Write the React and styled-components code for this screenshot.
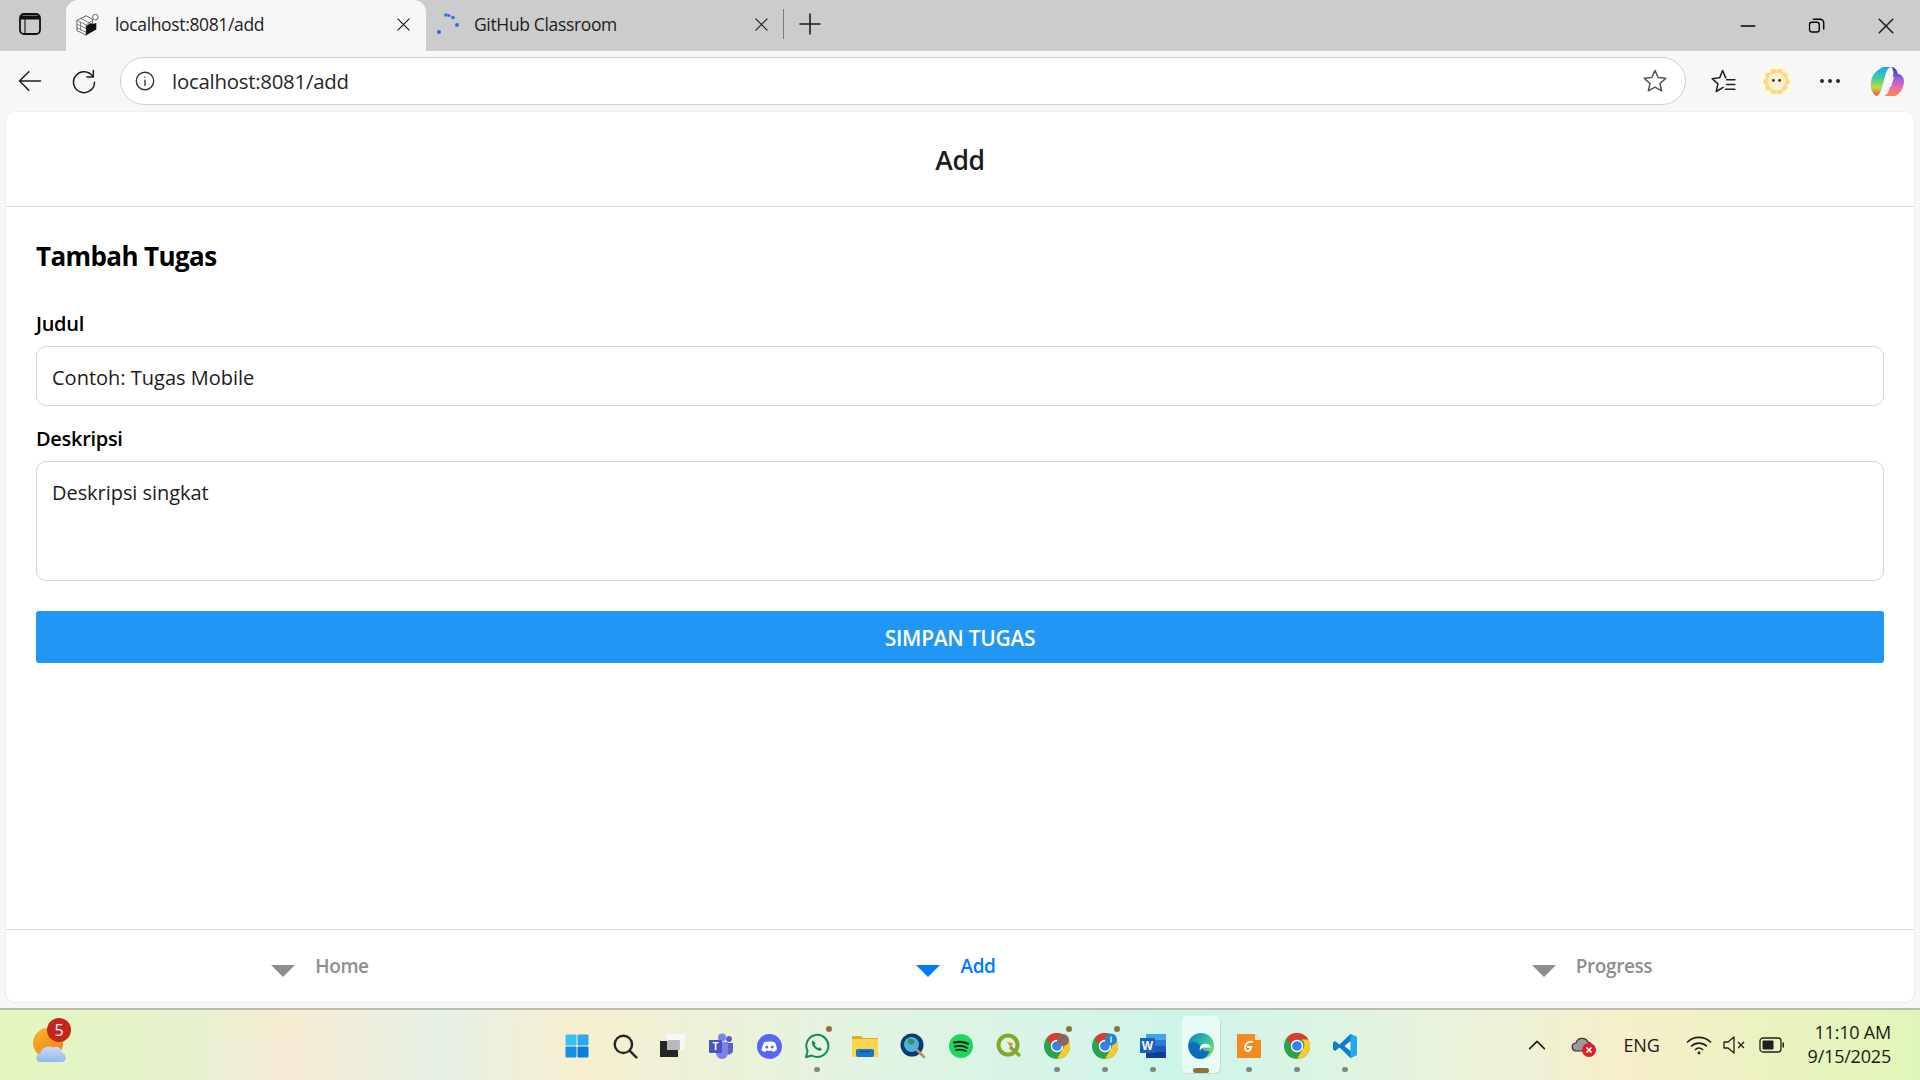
import React from 'react';
import styled, { createGlobalStyle } from 'styled-components';

const UI_FONT = '"Open Sans", "Noto Sans", "Liberation Sans", sans-serif';

const GlobalStyle = createGlobalStyle`
  html, body {
    margin: 0;
    padding: 0;
    height: 100%;
    overflow: hidden;
  }

  body {
    font-family: ${UI_FONT};
    background-color: #f7f7f7;
  }

  * {
    box-sizing: border-box;
  }
`;

const Screen = styled.div`
  display: flex;
  flex-direction: column;
  width: 1920px;
  height: 1080px;
  background-color: #f7f7f7;
`;

/* browser tab strip */
const TabStrip = styled.div`
  display: flex;
  align-items: center;
  height: 51px;
  flex-shrink: 0;
  background-color: #cccccc;
`;

const StripButton = styled.div`
  display: flex;
  align-items: center;
  justify-content: center;
  width: 66px;
  height: 51px;
  padding: 0 7px 4px 0;
  flex-shrink: 0;
`;

const Tab = styled.div`
  display: flex;
  align-items: center;
  width: ${(props) => (props.$active ? '360px' : '357px')};
  height: 51px;
  padding: ${(props) => (props.$active ? '0 15px 3px 10px' : '0 14px 3px 9px')};
  flex-shrink: 0;
  background-color: ${(props) => (props.$active ? '#f7f7f7' : 'transparent')};
  border-radius: ${(props) => (props.$active ? '12px 12px 0 0' : '0')};
  color: #1d1d1d;
`;

const Favicon = styled.div`
  display: flex;
  align-items: center;
  justify-content: center;
  width: 24px;
  height: 24px;
  margin-right: 15px;
  flex-shrink: 0;
`;

const TabTitle = styled.span`
  flex: 1;
  font-size: 17.5px;
  letter-spacing: -0.35px;
  white-space: nowrap;
`;

const TabDivider = styled.div`
  width: 1px;
  height: 30px;
  margin-bottom: 3px;
  background-color: #7c7c7c;
  flex-shrink: 0;
`;

const NewTab = styled.div`
  display: flex;
  align-items: center;
  justify-content: center;
  width: 52px;
  height: 51px;
  padding-bottom: 3px;
  flex-shrink: 0;
`;

const WindowControls = styled.div`
  display: flex;
  align-items: center;
  margin-left: auto;
`;

const WindowButton = styled.div`
  display: flex;
  align-items: center;
  justify-content: center;
  width: 69px;
  height: 51px;
`;

/* address bar row */
const Toolbar = styled.div`
  display: flex;
  align-items: center;
  height: 60px;
  flex-shrink: 0;
  padding: 0 6px 0 0;
`;

const ToolButton = styled.div`
  display: flex;
  align-items: center;
  justify-content: center;
  width: 54px;
  height: 48px;
  flex-shrink: 0;
  margin-left: ${(props) => props.$offset || 0}px;
`;

const AddressBar = styled.div`
  display: flex;
  align-items: center;
  flex: 1;
  height: 48px;
  margin: 0 9px 0 9px;
  padding: 0 16px 0 13px;
  background-color: #ffffff;
  border: 1.5px solid #d0d0d0;
  border-radius: 24px;
`;

const Url = styled.span`
  flex: 1;
  margin-left: 16px;
  font-size: 20.4px;
  letter-spacing: -0.25px;
  color: #262626;
`;

const ProfileCircle = styled.div`
  display: flex;
  align-items: center;
  justify-content: center;
  width: 35px;
  height: 35px;
  border-radius: 50%;
  background-color: #fdf9e8;
`;

/* page content */
const Page = styled.div`
  display: flex;
  flex-direction: column;
  flex: 1;
  margin: 0 5px 5px;
  background-color: #ffffff;
  border: 1px solid #ececec;
  border-top-color: #f0f0f0;
  border-radius: 10px;
  overflow: hidden;
`;

const PageHeader = styled.header`
  display: flex;
  align-items: center;
  justify-content: center;
  height: 95px;
  padding-top: 2px;
  flex-shrink: 0;
  border-bottom: 1px solid #d8d8d8;
`;

const HeaderTitle = styled.h1`
  margin: 0;
  font-size: 26.5px;
  font-weight: 600;
  letter-spacing: -0.4px;
  color: #1c1c1e;
`;

const Form = styled.form`
  display: flex;
  flex-direction: column;
  flex: 1;
  padding: 33px 30px 0;
`;

const FormTitle = styled.h2`
  margin: 0 0 40px;
  font-size: 26px;
  line-height: 32px;
  font-weight: 700;
  letter-spacing: -0.6px;
  color: #000000;
`;

const Label = styled.label`
  display: block;
  margin-bottom: 10px;
  font-size: 20px;
  line-height: 24px;
  font-weight: 600;
  letter-spacing: -0.3px;
  color: #000000;
`;

const TextInput = styled.input`
  display: block;
  width: 100%;
  height: 60px;
  margin-bottom: 21px;
  padding: 2px 15px 0;
  font-family: ${UI_FONT};
  font-size: 20px;
  letter-spacing: 0;
  background-color: #ffffff;
  border: 1px solid #ccd6e4;
  border-radius: 10px;
  outline: none;

  &::placeholder {
    color: #1c1c1c;
    opacity: 1;
  }
`;

const TextArea = styled.textarea`
  display: block;
  width: 100%;
  height: 120px;
  margin-bottom: 30px;
  padding: 17px 15px;
  font-family: ${UI_FONT};
  font-size: 20px;
  line-height: 27px;
  letter-spacing: -0.05px;
  background-color: #ffffff;
  border: 1px solid #ccd6e4;
  border-radius: 10px;
  outline: none;
  resize: none;

  &::placeholder {
    color: #1c1c1c;
    opacity: 1;
  }
`;

const SaveButton = styled.button`
  display: block;
  width: 100%;
  height: 52px;
  padding: 2px 0 0;
  font-family: ${UI_FONT};
  font-size: 21px;
  font-weight: 600;
  letter-spacing: -0.3px;
  color: #ffffff;
  background-color: #2196f3;
  border: none;
  border-radius: 3px;
`;

const TabBar = styled.nav`
  display: grid;
  grid-template-columns: repeat(3, 1fr);
  height: 73px;
  flex-shrink: 0;
  border-top: 1px solid #d8d8d8;
`;

const TabBarItem = styled.div`
  display: flex;
  align-items: center;
  justify-content: center;
  gap: 20px;
  padding: 0 8px 0 0;
  font-size: 19px;
  font-weight: 600;
  letter-spacing: -0.4px;
  color: ${(props) => (props.$active ? '#007aff' : '#8e8e8f')};
`;

const Triangle = styled.span`
  display: block;
  width: 0;
  height: 0;
  margin-top: 9px;
  border-left: 12px solid transparent;
  border-right: 12px solid transparent;
  border-top: 12px solid ${(props) => (props.$active ? '#007aff' : '#8e8e8f')};
`;

/* windows taskbar */
const Taskbar = styled.footer`
  display: grid;
  grid-template-columns: 553px auto 1fr;
  align-items: center;
  height: 72px;
  flex-shrink: 0;
  border-top: 2px solid #bcbcae;
  background: linear-gradient(
    90deg,
    #e3f6bf 0%,
    #e6f2cf 10%,
    #f6ecd2 15%,
    #e6f1e6 23%,
    #f6efcf 30%,
    #e2f4e2 45%,
    #cdf5ea 62%,
    #e9f3dc 75%,
    #f6efca 85%,
    #e0f6b8 100%
  );
`;

const Widget = styled.div`
  position: relative;
  width: 40px;
  height: 40px;
  margin: 0 0 0 30px;
`;

const WidgetBadge = styled.span`
  position: absolute;
  top: -7px;
  left: 17px;
  display: flex;
  align-items: center;
  justify-content: center;
  width: 24px;
  height: 24px;
  font-size: 16px;
  color: #ffffff;
  background-color: #c4261b;
  border-radius: 50%;
`;

const AppList = styled.div`
  display: flex;
  align-items: center;
  height: 70px;
`;

const AppSlot = styled.div`
  position: relative;
  display: flex;
  align-items: center;
  justify-content: center;
  width: 48px;
  height: 66px;
  padding-top: 2px;

  &::before {
    content: '';
    display: ${(props) => (props.$focused ? 'block' : 'none')};
    position: absolute;
    top: 4px;
    bottom: 5px;
    left: 5px;
    right: 5px;
    background-color: rgba(255, 255, 255, 0.55);
    border-radius: 5px;
    box-shadow: 1px 1px 0 rgba(190, 215, 210, 0.8);
  }

  svg {
    position: relative;
    flex-shrink: 0;
  }
`;

const RunDot = styled.span`
  position: absolute;
  bottom: ${(props) => (props.$focused ? '5px' : '6px')};
  left: 50%;
  width: ${(props) => (props.$focused ? '16px' : '6px')};
  height: 5px;
  background-color: ${(props) => (props.$focused ? '#8a7436' : '#7e8a84')};
  border-radius: 3px;
  transform: translateX(-50%);
`;

const NotifyDot = styled.span`
  position: absolute;
  top: 14px;
  right: 9px;
  width: 6px;
  height: 6px;
  background-color: #8a7436;
  border-radius: 50%;
`;

const Tray = styled.div`
  display: flex;
  align-items: center;
  justify-content: flex-end;
  height: 100%;
  padding-right: 29px;
  color: #1a1a1a;
`;

const TrayIcon = styled.div`
  display: flex;
  align-items: center;
  justify-content: center;
  width: ${(props) => props.$width || 36}px;
  margin-right: ${(props) => props.$gap || 0}px;
`;

const TrayText = styled.span`
  margin-right: 24px;
  font-size: 18px;
  letter-spacing: -0.2px;
`;

const Clock = styled.div`
  margin-left: 22px;
  padding-bottom: 3px;
  text-align: right;
  font-size: 18px;
  line-height: 24px;
  letter-spacing: -0.2px;
`;

const Line = ({ size = 24, width = 1.6, color = '#1d1d1d', children }) => (
  <svg width={size} height={size} viewBox="0 0 24 24" fill="none" stroke={color} strokeWidth={width} strokeLinecap="round" strokeLinejoin="round">
    {children}
  </svg>
);

const CloseIcon = ({ size = 15, width = 1.9 }) => (
  <Line size={size} width={width}>
    <path d="M3 3l18 18M21 3L3 21" />
  </Line>
);

const StarPath = 'M12 3l2.7 6 6.5.7-4.9 4.4 1.4 6.4L12 17.2l-5.7 3.3 1.4-6.4-4.9-4.4 6.5-.7z';

const SidebarIcon = () => (
  <svg width="22" height="22" viewBox="0 0 22 22" fill="none" stroke="#111111">
    <rect x="1" y="1" width="20" height="20" rx="4" strokeWidth="1.8" />
    <path d="M1.500 4.500h19" strokeWidth="4" />
    <path d="M6 6v14" strokeWidth="1.100" />
  </svg>
);

const SourcesIcon = () => (
  <svg width="26" height="25" viewBox="0 0 26 25">
    <path d="M1 8l10-5 7 4v12l-7 5-10-5z" fill="#ffffff" stroke="#444" strokeWidth="0.900" />
    <path d="M1 8l10 5v11M11 13l7-5M1 12l10 5M1 16l10 5M5 6l10 5M5 10v9" fill="none" stroke="#555" strokeWidth="0.800" />
    <path d="M11 14l5-3 2 1 4-1v7l-11 6z" fill="#111111" />
    <circle cx="21" cy="4.500" r="3" fill="#ffffff" stroke="#555" strokeWidth="1" />
  </svg>
);

const Spinner = () => (
  <svg width="24" height="30" viewBox="0 0 24 30" fill="#2f6fe4">
    <circle cx="11" cy="6" r="1.800" />
    <circle cx="14" cy="6.500" r="1.600" />
    <circle cx="18" cy="8.500" r="1.800" />
    <circle cx="22" cy="16" r="2" />
    <circle cx="4" cy="23" r="2" />
  </svg>
);

const CopilotIcon = () => (
  <svg width="34" height="31" viewBox="0 0 34 31">
    <defs>
      <linearGradient id="copLeft" x1="0.500" y1="0" x2="0.500" y2="1">
        <stop offset="0" stopColor="#1fa5e6" />
        <stop offset="0.400" stopColor="#3fcf9c" />
        <stop offset="0.700" stopColor="#c6d93c" />
        <stop offset="1" stopColor="#f2553e" />
      </linearGradient>
      <linearGradient id="copRight" x1="0.500" y1="0" x2="0.500" y2="1">
        <stop offset="0" stopColor="#1040c8" />
        <stop offset="0.400" stopColor="#a45de0" />
        <stop offset="0.750" stopColor="#ef6fa0" />
        <stop offset="1" stopColor="#f58a3c" />
      </linearGradient>
    </defs>
    <path d="M10 3c1-1.500 3-2 5-2h6c-3 1-4 3-5 6l-4 14c-1 4-3 9-6 9-4-3-6-8-5-14 .5-5 4-11 9-13z" fill="url(#copLeft)" />
    <path d="M21 1c4 0 6 3 7 7h1c3 1 5 4 5 7 0 7-4 13-9 15H14c3-1 4-3 5-6l4-14c1-3 0-8-2-9z" fill="url(#copRight)" />
    <path d="M17 11h7l-3 10h-7z" fill="#f7f7f7" />
  </svg>
);

const ProfileFace = () => (
  <svg width="27" height="27" viewBox="0 0 26 26">
    {[0, 36, 72, 108, 144, 180, 216, 252, 288, 324].map((angle) => (
      <circle key={angle} cx={13 + 9.500 * Math.cos((angle * Math.PI) / 180)} cy={13 + 9.500 * Math.sin((angle * Math.PI) / 180)} r="3.200" fill="#f6dc86" />
    ))}
    <circle cx="13" cy="13" r="8.500" fill="#fcf1cf" />
    <circle cx="10" cy="12" r="1.300" fill="#2f241a" />
    <circle cx="16" cy="12" r="1.300" fill="#2f241a" />
  </svg>
);

const WindowsIcon = () => (
  <svg width="24" height="24" viewBox="0 0 24 24">
    <rect x="0.500" y="0.500" width="11" height="11" rx="1" fill="#38c0f5" />
    <rect x="12.500" y="0.500" width="11" height="11" rx="1" fill="#2aa7ee" />
    <rect x="0.500" y="12.500" width="11" height="11" rx="1" fill="#1690e2" />
    <rect x="12.500" y="12.500" width="11" height="11" rx="1" fill="#0c7ed8" />
  </svg>
);

const SearchIcon = () => (
  <Line size={26} width={2.200} color="#262626">
    <circle cx="10.500" cy="10.500" r="8" />
    <path d="M16.500 16.500l6 6" />
  </Line>
);

const TaskViewIcon = () => (
  <svg width="26" height="24" viewBox="0 0 26 24">
    <rect x="7" y="0" width="18" height="16" fill="#f7f7f5" />
    <rect x="8" y="6" width="12" height="10" fill="#bdbdbd" />
    <rect x="0" y="7" width="18" height="16" fill="#262626" />
    <rect x="7" y="7" width="11" height="9" fill="#b8b8b8" />
  </svg>
);

const TeamsIcon = () => (
  <svg width="26" height="26" viewBox="0 0 26 26">
    <circle cx="21" cy="6" r="3" fill="#5b5fc7" />
    <circle cx="14" cy="4.500" r="4" fill="#7b83eb" />
    <path d="M18 10h7v8a4 4 0 0 1-7 2z" fill="#5b5fc7" />
    <path d="M8 9h12v11a6 6 0 0 1-12 0z" fill="#7b83eb" />
    <rect x="1" y="7" width="13" height="13" rx="1" fill="#4b53bc" />
    <text x="7.500" y="17" textAnchor="middle" fontSize="10" fontWeight="700" fill="#fff" fontFamily="Liberation Sans, sans-serif">T</text>
  </svg>
);

const DiscordIcon = () => (
  <svg width="25" height="25" viewBox="0 0 25 25">
    <circle cx="12.500" cy="12.500" r="12.500" fill="#5865f2" />
    <path d="M7 8.500c3-1.400 8-1.400 11 0 1.300 2.400 1.900 5 1.700 7.600-1.200 1-2.600 1.600-3.800 1.800l-.9-1.400c-2 .5-3.900.5-5.900 0l-.9 1.400c-1.200-.2-2.600-.8-3.800-1.800C5.100 13.500 5.700 10.900 7 8.500z" fill="#fff" />
    <circle cx="9.800" cy="13" r="1.500" fill="#5865f2" />
    <circle cx="15.200" cy="13" r="1.500" fill="#5865f2" />
  </svg>
);

const WhatsAppIcon = () => (
  <svg width="26" height="26" viewBox="0 0 26 26" fill="none">
    <path d="M2 24l1.600-6A11 11 0 1 1 8 22.500z" stroke="#178a5c" strokeWidth="2" strokeLinejoin="round" />
    <path d="M9 7.500c-1 .8-1.500 2-1 3.500 1 3 3.500 5.500 6.500 6.500 1.500.5 2.800 0 3.500-1.200l-2.500-2-1.300 1c-1.600-.7-2.800-2-3.500-3.500l1-1.300z" fill="#178a5c" />
  </svg>
);

const FolderIcon = () => (
  <svg width="26" height="22" viewBox="0 0 26 22">
    <path d="M0 1h9l2 2h15v19H0z" fill="#e9a91f" />
    <rect x="0" y="4" width="26" height="18" fill="#fcd453" />
    <rect x="4" y="14" width="18" height="8" rx="2" fill="#1678c6" />
    <rect x="8" y="16" width="10" height="1.200" fill="#0b4f8c" />
  </svg>
);

const MagnifierGlobeIcon = () => (
  <svg width="26" height="26" viewBox="0 0 26 26">
    <circle cx="12" cy="12" r="11.500" fill="#0b3a6e" />
    <circle cx="11.500" cy="11.500" r="7.500" fill="#4fb2dc" />
    <path d="M8 6c3-1 6 0 7 3l-3 3-4-2z" fill="#3c8f5c" />
    <path d="M17 17l7 7" stroke="#c08c62" strokeWidth="2.500" strokeLinecap="round" />
  </svg>
);

const SpotifyIcon = () => (
  <svg width="24" height="24" viewBox="0 0 24 24" fill="none" stroke="#17251b" strokeLinecap="round">
    <circle cx="12" cy="12" r="12" fill="#1ed760" stroke="none" />
    <path d="M5 8.500c5-1.200 10-.8 14 1.300" strokeWidth="2.200" />
    <path d="M6 12.500c4-1 8.500-.6 12 1.300" strokeWidth="1.900" />
    <path d="M7 16c3.500-.8 7-.4 10 1.100" strokeWidth="1.600" />
  </svg>
);

const QgisIcon = () => (
  <svg width="26" height="26" viewBox="0 0 26 26" fill="none">
    <circle cx="12" cy="12" r="9.500" stroke="#85a82c" strokeWidth="4" />
    <path d="M14 14l10 9" stroke="#85a82c" strokeWidth="3.500" />
    <path d="M11 9l6 1-2 5z" fill="#ee8a3c" />
  </svg>
);

const ChromeIcon = ({ overlay }) => (
  <svg width="26" height="26" viewBox="0 0 26 26">
    <circle cx="13" cy="13" r="13" fill="#2ba24c" />
    <path d="M13 0a13 13 0 0 1 11.300 6.500H13a6.500 6.500 0 0 0-6.200 4.500L2.600 5.200A13 13 0 0 1 13 0z" fill="#e2372e" />
    <path d="M24.300 6.500A13 13 0 0 1 13 26l5.600-9.700a6.500 6.500 0 0 0-1-9.800z" fill="#fbc92d" />
    <circle cx="13" cy="13" r="6.200" fill="#ffffff" />
    <circle cx="13" cy="13" r="4.800" fill="#3a80ec" />
    {overlay === 'photo' && <circle cx="19" cy="7" r="6" fill="#8a6560" />}
    {overlay === 'info' && <circle cx="19" cy="6.500" r="6" fill="#2286d8" />}
    {overlay === 'info' && <rect x="18.400" y="3.500" width="1.300" height="6" fill="#ffffff" />}
  </svg>
);

const WordIcon = () => (
  <svg width="26" height="24" viewBox="0 0 26 24">
    <rect x="6" y="0" width="20" height="6" fill="#41a5ee" />
    <rect x="6" y="6" width="20" height="6" fill="#2b7cd3" />
    <rect x="6" y="12" width="20" height="6" fill="#185abd" />
    <rect x="6" y="18" width="20" height="6" fill="#103f91" />
    <rect x="0" y="4" width="15" height="15" fill="#1e5fc0" />
    <text x="7.500" y="16" textAnchor="middle" fontSize="12" fontWeight="700" fill="#fff" fontFamily="Liberation Sans, sans-serif">W</text>
  </svg>
);

const EdgeIcon = () => (
  <svg width="26" height="26" viewBox="0 0 26 26">
    <defs>
      <linearGradient id="edgeTop" x1="0" y1="0" x2="1" y2="0.700">
        <stop offset="0" stopColor="#0c7ac8" />
        <stop offset="0.600" stopColor="#33bfa0" />
        <stop offset="1" stopColor="#7fdc64" />
      </linearGradient>
    </defs>
    <circle cx="13" cy="13" r="13" fill="url(#edgeTop)" />
    <path d="M1 11c3-3 9-3 11 2 1 3 5 6 10 5-2 5-6 8-10 8C5 26 0 19 1 11z" fill="#0f6cbd" />
    <path d="M12 18c-1-4 2-8 7-7 3 .5 4 2 3.500 3.500H15.500c-1.500 0-2.500 1.500-3.500 3.500z" fill="#ffffff" />
  </svg>
);

const FoxitIcon = () => (
  <svg width="24" height="24" viewBox="0 0 24 24">
    <path d="M0 0h18l6 6v18H0z" fill="#f58a1f" />
    <path d="M18 0l6 6h-6z" fill="#fde3c4" />
    <path d="M15 8c-4-1-7 2-7 6 0 3 3 4 5 2l1-3h-3" fill="none" stroke="#ffffff" strokeWidth="2" strokeLinecap="round" />
  </svg>
);

const VsCodeIcon = () => (
  <svg width="24" height="24" viewBox="0 0 24 24">
    <path d="M17.500 0L24 3v18l-6.500 3-11-10.500L2 17l-2-1.500V8.500L2 7l4.500 3.500z" fill="#0a7fcb" />
    <path d="M17.500 0L24 3v18l-6.500 3z" fill="#22a7f0" />
    <path d="M17.500 7l-6 5 6 5z" fill="#f0f8ee" />
  </svg>
);

const WeatherIcon = () => (
  <svg width="40" height="40" viewBox="0 0 40 40">
    <defs>
      <linearGradient id="sun" x1="0" y1="0" x2="1" y2="1">
        <stop offset="0" stopColor="#f6b62c" />
        <stop offset="1" stopColor="#ec7c14" />
      </linearGradient>
      <linearGradient id="cloud" x1="0" y1="0" x2="0" y2="1">
        <stop offset="0" stopColor="#c9dcfa" />
        <stop offset="1" stopColor="#94b8ee" />
      </linearGradient>
    </defs>
    <circle cx="18" cy="18" r="15" fill="url(#sun)" />
    <path d="M10 37c-5 0-5-8 0-8.500 1-5 8-9 13-6 5-2 9 1 9 5.500 5 0 5 9 0 9z" fill="url(#cloud)" />
  </svg>
);

const TrayCloudIcon = () => (
  <svg width="26" height="24" viewBox="0 0 26 24">
    <path d="M5 18C0 18 0 10 5 10c1-5 9-7 12-1 3 0 4 3 3 6v3z" fill="#9a9a9a" stroke="#333" strokeWidth="1.200" />
    <circle cx="18" cy="17" r="7" fill="#d9202c" />
    <path d="M15.500 14.500l5 5M20.500 14.500l-5 5" stroke="#ffffff" strokeWidth="1.600" />
  </svg>
);

const VolumeMuteIcon = () => (
  <svg width="24" height="20" viewBox="0 0 24 20" fill="none" stroke="#1f1f1f" strokeWidth="1.300" strokeLinejoin="round">
    <path d="M1 7h4l6-5v16l-6-5H1z" />
    <path d="M15 7l6 6M21 7l-6 6" />
  </svg>
);

const WifiIcon = () => (
  <svg width="26" height="22" viewBox="0 0 26 22" fill="none" stroke="#1f1f1f" strokeWidth="1.700" strokeLinecap="round">
    <path d="M1.500 8a16.500 16.500 0 0 1 23 0" />
    <path d="M5.500 12a11 11 0 0 1 15 0" />
    <path d="M9.500 15.500a5 5 0 0 1 7 0" />
    <circle cx="13" cy="19" r="1.400" fill="#1f1f1f" stroke="none" />
  </svg>
);

const BatteryIcon = () => (
  <svg width="26" height="16" viewBox="0 0 26 16" fill="none">
    <rect x="1" y="1" width="21" height="14" rx="3" stroke="#1f1f1f" strokeWidth="1.300" />
    <rect x="3.500" y="3.500" width="11" height="9" rx="1" fill="#1f1f1f" />
    <path d="M23.500 5.500h1.500v5h-1.500z" fill="#1f1f1f" />
  </svg>
);

const APPS = [
  { id: 'start', icon: <WindowsIcon /> },
  { id: 'search', icon: <SearchIcon /> },
  { id: 'taskview', icon: <TaskViewIcon /> },
  { id: 'teams', icon: <TeamsIcon /> },
  { id: 'discord', icon: <DiscordIcon /> },
  { id: 'whatsapp', icon: <WhatsAppIcon />, running: true, notify: true },
  { id: 'files', icon: <FolderIcon /> },
  { id: 'globe', icon: <MagnifierGlobeIcon /> },
  { id: 'spotify', icon: <SpotifyIcon /> },
  { id: 'qgis', icon: <QgisIcon /> },
  { id: 'chrome-a', icon: <ChromeIcon overlay="photo" />, running: true, notify: true },
  { id: 'chrome-b', icon: <ChromeIcon overlay="info" />, running: true, notify: true },
  { id: 'word', icon: <WordIcon />, running: true },
  { id: 'edge', icon: <EdgeIcon />, running: true, focused: true },
  { id: 'foxit', icon: <FoxitIcon />, running: true },
  { id: 'chrome-c', icon: <ChromeIcon />, running: true },
  { id: 'vscode', icon: <VsCodeIcon />, running: true },
];

const BrowserChrome = () => (
  <>
    <TabStrip>
      <StripButton>
        <SidebarIcon />
      </StripButton>
      <Tab $active>
        <Favicon>
          <SourcesIcon />
        </Favicon>
        <TabTitle>localhost:8081/add</TabTitle>
        <CloseIcon />
      </Tab>
      <Tab>
        <Favicon>
          <Spinner />
        </Favicon>
        <TabTitle>GitHub Classroom</TabTitle>
        <CloseIcon />
      </Tab>
      <TabDivider />
      <NewTab>
        <Line size={24} width={1.600}>
          <path d="M12 2v20M2 12h20" />
        </Line>
      </NewTab>
      <WindowControls>
        <WindowButton>
          <Line size={18} width={1.800} color="#000000">
            <path d="M3 12h18" />
          </Line>
        </WindowButton>
        <WindowButton>
          <Line size={18} width={1.800} color="#000000">
            <rect x="2" y="7" width="13" height="13" rx="3" />
            <path d="M7 3h9a5 5 0 0 1 5 5v8" />
          </Line>
        </WindowButton>
        <WindowButton>
          <CloseIcon size={18} width={2} />
        </WindowButton>
      </WindowControls>
    </TabStrip>
    <Toolbar>
      <ToolButton $offset={3}>
        <Line size={28} width={1.300}>
          <path d="M21 12H3M11 4l-8 8 8 8" />
        </Line>
      </ToolButton>
      <ToolButton>
        <Line size={28} width={1.300}>
          <path d="M19.500 8A9 9 0 1 0 21 13" />
          <path d="M20 3v5.500h-5.500" />
        </Line>
      </ToolButton>
      <AddressBar>
        <Line size={22} width={1.500} color="#333333">
          <circle cx="12" cy="12" r="9.500" />
          <path d="M12 11v6M12 7.500v.1" />
        </Line>
        <Url>localhost:8081/add</Url>
        <Line size={28} width={1.300} color="#555555">
          <path d={StarPath} />
        </Line>
      </AddressBar>
      <ToolButton>
        <Line size={28} width={1.300} color="#222222">
          <path d="M13 17.500l-6 3.500 1.500-6.500L3.500 10l6.500-.7L12.500 3l2.700 6.300" />
          <path d="M16 11h7M16 15h7M15 19h8" />
        </Line>
      </ToolButton>
      <ToolButton>
        <ProfileCircle>
          <ProfileFace />
        </ProfileCircle>
      </ToolButton>
      <ToolButton>
        <svg width="22" height="6" viewBox="0 0 22 6" fill="#2b2b2b">
          <circle cx="3" cy="3" r="2" />
          <circle cx="11" cy="3" r="2" />
          <circle cx="19" cy="3" r="2" />
        </svg>
      </ToolButton>
      <ToolButton $offset={3}>
        <CopilotIcon />
      </ToolButton>
    </Toolbar>
  </>
);

const TaskForm = () => (
  <Form>
    <FormTitle>Tambah Tugas</FormTitle>
    <Label>Judul</Label>
    <TextInput placeholder="Contoh: Tugas Mobile" />
    <Label>Deskripsi</Label>
    <TextArea placeholder="Deskripsi singkat" />
    <SaveButton type="button">SIMPAN TUGAS</SaveButton>
  </Form>
);

const BottomTabs = () => (
  <TabBar>
    {['Home', 'Add', 'Progress'].map((name) => (
      <TabBarItem key={name} $active={name === 'Add'}>
        <Triangle $active={name === 'Add'} />
        {name}
      </TabBarItem>
    ))}
  </TabBar>
);

const WindowsTaskbar = () => (
  <Taskbar>
    <Widget>
      <WeatherIcon />
      <WidgetBadge>5</WidgetBadge>
    </Widget>
    <AppList>
      {APPS.map((app) => (
        <AppSlot key={app.id} $focused={app.focused}>
          {app.icon}
          {app.notify && <NotifyDot />}
          {app.running && <RunDot $focused={app.focused} />}
        </AppSlot>
      ))}
    </AppList>
    <Tray>
      <TrayIcon $gap={11}>
        <Line size={22} width={1.800}>
          <path d="M4 16l8-8 8 8" />
        </Line>
      </TrayIcon>
      <TrayIcon $gap={22}>
        <TrayCloudIcon />
      </TrayIcon>
      <TrayText>ENG</TrayText>
      <TrayIcon $width={30} $gap={7}>
        <WifiIcon />
      </TrayIcon>
      <TrayIcon $width={28} $gap={9}>
        <VolumeMuteIcon />
      </TrayIcon>
      <TrayIcon $width={28}>
        <BatteryIcon />
      </TrayIcon>
      <Clock>
        <div>11:10 AM</div>
        <div>9/15/2025</div>
      </Clock>
    </Tray>
  </Taskbar>
);

const App = () => (
  <Screen>
    <GlobalStyle />
    <BrowserChrome />
    <Page>
      <PageHeader>
        <HeaderTitle>Add</HeaderTitle>
      </PageHeader>
      <TaskForm />
      <BottomTabs />
    </Page>
    <WindowsTaskbar />
  </Screen>
);

export default App;
